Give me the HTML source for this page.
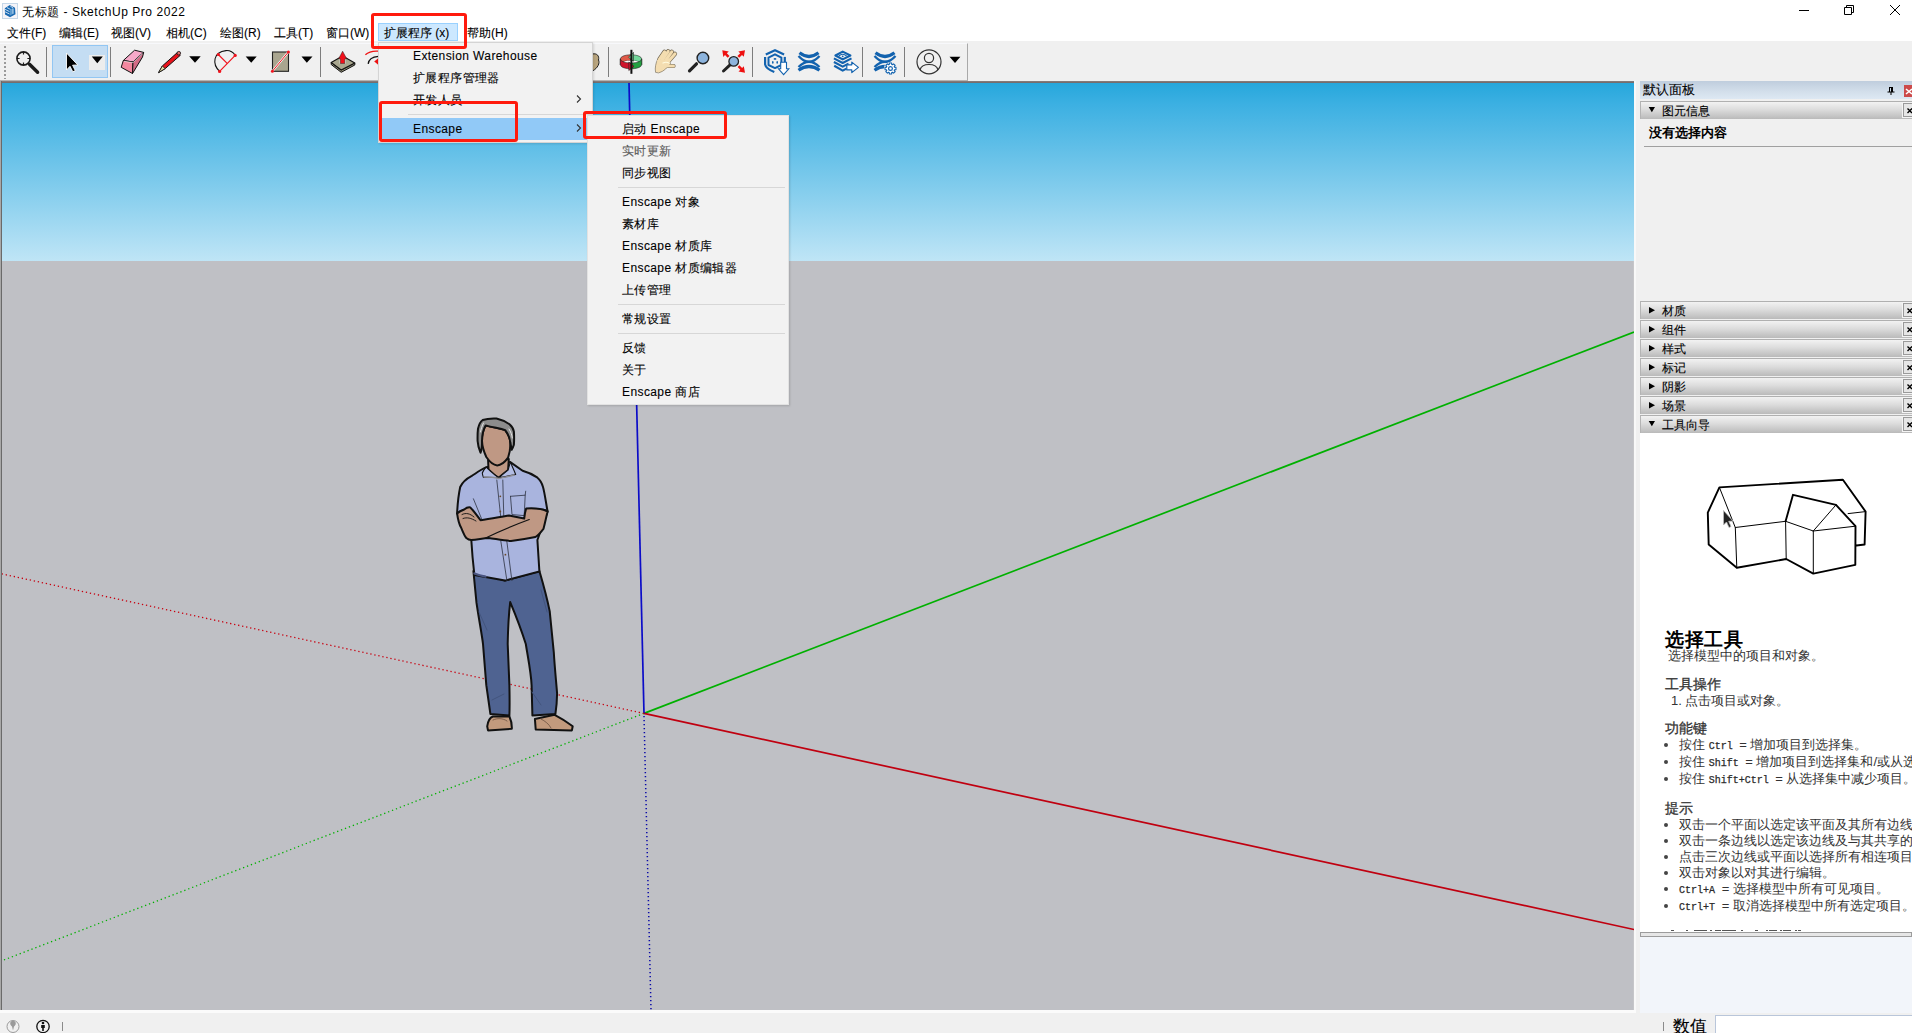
<!DOCTYPE html>
<html><head><meta charset="utf-8">
<style>
*{margin:0;padding:0;box-sizing:border-box}
html,body{width:1912px;height:1033px;overflow:hidden;background:#f0f0f0;font-family:"Liberation Sans",sans-serif;font-size:12px;color:#000}
.a{position:absolute}
.t{position:absolute;white-space:nowrap;line-height:12px}
svg{position:absolute;overflow:visible}
#titlebar{left:0;top:0;width:1912px;height:22px;background:#fff}
#menubar{left:0;top:22px;width:1912px;height:19px;background:#fff}
#toolbar{left:0;top:41px;width:1912px;height:40px;background:#f0f0f0}
#vpb{left:0;top:81px;width:1636px;height:929px;background:#9a9a9a}
#sky{left:2px;top:83px;width:1632px;height:178px;background:linear-gradient(#26a7dc,#3cb0e2 12%,#bfe5f6)}
#ground{left:2px;top:261px;width:1632px;height:749px;background:#bfc0c5}
#status{left:0;top:1011px;width:1912px;height:22px;background:#f0f0f0}
.mi{font-size:12px;-webkit-text-stroke:0.1px #000}
.dd{letter-spacing:0.4px}
</style></head><body>
<div id="titlebar" class="a"></div>
<div id="menubar" class="a"></div>
<div id="toolbar" class="a"></div>
<div id="vpb" class="a"></div>
<div id="sky" class="a"></div>
<div id="ground" class="a"></div>
<div id="status" class="a"></div>

<!-- VIEWPORT BORDER -->
<div class="a" style="left:0;top:81px;width:1636px;height:2px;background:linear-gradient(#8a8080,#6e6868)"></div>
<div class="a" style="left:0;top:81px;width:1px;height:929px;background:#a8a8a8"></div>
<div class="a" style="left:1px;top:81px;width:1px;height:929px;background:#6a6a6a"></div>
<div class="a" style="left:1634px;top:81px;width:2px;height:929px;background:#f8f8f8"></div>
<div class="a" style="left:1633px;top:261px;width:1px;height:749px;background:#c6c6c9"></div>
<!-- AXES -->
<svg style="left:0;top:0" width="1636" height="1011" viewBox="0 0 1636 1011">
<defs><clipPath id="vc"><rect x="2" y="83" width="1632" height="927"/></clipPath></defs>
<g clip-path="url(#vc)">
<path d="M644 713.4 L1634 332" stroke="#00b000" stroke-width="1.7"/>
<path d="M644 713.4 L1634 929.5" stroke="#c00010" stroke-width="1.7"/>
<path d="M629 83 L644 713.4" stroke="#0c0cc8" stroke-width="1.7"/>
<path d="M644 713.4 L0 961.5" stroke="#00b000" stroke-width="1.3" stroke-dasharray="1.3 2.9"/>
<path d="M644 713.4 L0 573.5" stroke="#c80010" stroke-width="1.3" stroke-dasharray="1.3 2.8"/>
<path d="M644 716 L651 1010" stroke="#0808a8" stroke-width="1.5" stroke-dasharray="1.3 2.7"/>
</g>
</svg>

<!-- PERSON -->
<svg style="left:0;top:0" width="1636" height="1011" viewBox="0 0 1636 1011">
<g stroke="#111" stroke-width="2" stroke-linejoin="round" stroke-linecap="round">
<!-- jeans -->
<path d="M473.4 571 L476.5 602.9 C479 620 482 635 483 644 L486.3 685.2 L490.4 714 L509.4 715.5 C509.8 705 509.6 695 509.4 685.2 L507.7 644 C508 628 509 612 510.2 602.1 C516 616 522 632 525.8 644 C528 658 531 672 531.6 685.2 L532.4 715.5 L555.4 714 C556.5 707 557 700 557.1 693.4 C556 680 554.5 665 553.8 652.3 C552.5 638 551 624 549.7 611.1 C547 598 543.5 585 539.4 571 L504.9 580.6 Z" fill="#4f6391"/>
<path d="M479 612 L487 630 M492 700 L504 694 M541 590 L547 612 M532 692 L541 705" stroke="#43557e" stroke-width="1" fill="none"/>
<!-- shoes -->
<path d="M487.2 726.3 C488 721 490 717.5 492.9 716.5 L509.4 716.5 C511 720 512 725 511.8 728.8 L488 730.4 Z" fill="#c29a7d"/>
<path d="M534.9 718.9 L554.6 714.8 C561 718 567 722 572.7 726.3 L571.9 730.4 L535.7 729.5 Z" fill="#c29a7d"/>
<path d="M493 720 C497 718 503 718 507 721 M541 719 C545 721 549 724 551 728" stroke="#6b5040" stroke-width="0.8" fill="none"/>
<!-- shirt -->
<path d="M486.3 467.2 C480 470 475 474 471.8 475.9 C466 479 462 483 460.2 487 C458.5 495 457.5 505 457.1 513.5 L463.2 510 L471.3 540 C472 552 473 563 474.4 575 L504.9 580.6 L539.4 571.5 L537.4 540 L547.6 511.5 C546 503 544.5 492 543 487 C541 480 537 477.4 537.1 477.4 C532 474 527 472 522.6 470.8 L510.3 462.1 Z" fill="#a9b4de"/>
<path d="M474.4 573.5 C478 575 482 576 485.6 576.6" stroke="#4a5580" stroke-width="2.2" fill="none"/>
<!-- shirt details -->
<g fill="none" stroke="#2c3140" stroke-width="0.8">
<path d="M496.8 480 L500.8 517.6 M502.8 480 L503.8 517.6 M500.8 541 L506.9 580.6 M506.8 541 L511.9 580.6"/>
<path d="M510.5 496.3 L525.2 495.2 L525.7 491.2 M510.5 496.3 L512 514.6 L524.2 515.6 L525.2 495.2"/>
<path d="M473.4 498.8 L481.5 518.6"/>
</g>
<circle cx="500.3" cy="496.3" r="0.9" fill="#6b4a2a" stroke="none"/><circle cx="500.3" cy="511.5" r="0.9" fill="#6b4a2a" stroke="none"/><circle cx="505.4" cy="554.7" r="0.9" fill="#6b4a2a" stroke="none"/>
<!-- arms -->
<path d="M457.1 513.5 C458 520 459.5 525 461.2 527.8 C463 532 464.5 536 466.3 538 C468 539.5 470 540 471.3 540 C477 539.5 483 538.5 488.6 538 C496 539 504 540.5 511 541 C519 540 528 538.5 535.4 537 C539 535 541.5 531 543.5 528.8 C545 523 546 518 547.6 511.5 C542 508.5 534 508 526.2 508.5 C525 512 524.5 515 524.2 518.6 C516 517 510 515.8 509 515.6 C500 517 490 519 480.5 520.2 C476 514 472 509 470.3 507.4 C468 507 466 508 464.2 509.5 C461 510.5 459 511.5 457.1 513.5 Z" fill="#bf9884"/>
<path d="M485.6 538 C496 533 512 526 529.3 519.6" fill="none" stroke-width="1.1"/>
<path d="M462 514.5 C466 512.5 470 513.5 474 517 M463 518.5 C467 517 471 518 476 521" fill="none" stroke-width="0.9"/>
<path d="M526 508.5 C532 508.5 540 508.2 546.5 510" fill="none" stroke-width="1.1"/>
<!-- neck -->
<path d="M488.1 460 L488.5 469.4 C492 473 495.5 476 498.7 477.7 C502 475 505 472.5 508.1 470.1 L508.8 459 Z" fill="#bf9884"/>
<!-- collar -->
<path d="M486.3 467.2 C484.5 469 483 471 482.3 473 C482.5 475 483 476.5 483.4 477.4 C488 477 494 477.5 498.7 477.7 C495 475 491 471.5 488.5 469.4 Z" fill="#b3bde4" stroke-width="1.1"/>
<path d="M508.1 470.1 C505 472.5 502 475 498.7 477.7 C504 477 510 475.5 515.7 474.5 C514 470 512 466 510.3 462.1 Z" fill="#b3bde4" stroke-width="1.1"/>
<path d="M484 477 C490 477 495 477.5 498.7 478.5 C503 477.5 508 476.5 514 475" fill="none" stroke="#8d8d95" stroke-width="1.4"/>
<!-- face -->
<path d="M485.6 425.4 C490 427 494 427.5 497.2 428 C501 428.7 503.5 429.5 505.2 430.2 C508 434 510 438 510.3 442.5 C510.5 448 509.8 453 508.1 457.7 C505 462 501 465.4 497.2 465.4 C492.5 465 489 461 486.3 457 C484 452 482.2 446 482 441 C482 434 483.5 429 485.6 425.4 Z" fill="#bf9884"/>
<!-- hair -->
<path d="M478 428.7 C479 424.5 480.5 421.5 482.7 420 C487 418.5 492 418.3 496.5 418.5 C501 419.5 505.5 421.5 509.5 424.3 C512 426.5 513.5 429 513.9 431.6 C514.2 436 514.2 440.5 513.9 444.7 C513.3 446.5 512.6 448.3 511.7 449.8 C511 446 510.6 444 510.3 442.5 C510 438 508 434 505.2 430.2 C503.5 429.5 501 428.7 497.2 428 C494 427.5 490 427 485.6 425.4 C483.5 429 482 434 482 441 C482 445 482.3 449 480.5 452.7 C479 449 477.8 445 477.6 441 C477.5 437 477.6 432 478 428.7 Z" fill="#8c8c8c"/>
<path d="M483.5 423 C482 426 481 429 480.5 432 M509 429 C511 432 512 435 512.3 438" fill="none" stroke="#e6e6e6" stroke-width="1"/>
</g>
</svg>
<!-- TITLE -->
<svg style="left:0;top:0" width="22" height="22" viewBox="0 0 22 22">
<rect x="2.5" y="3.5" width="15" height="15" fill="#f5f4f8" stroke="#c5d7e8"/>
<path d="M4.8 8.2 L9.8 5 L15 7.8 L15.5 14.2 L10 17.2 L5 14.6 Z" fill="#1a6ab2"/>
<path d="M5 9.3 L9.5 11.6 M5 11.8 L9.5 14 M7 7.6 L11.5 9.9 M10.3 6.2 L13 7.7" stroke="#cfe2f4" stroke-width="0.9" fill="none"/>
<path d="M10 9.5 L13.2 8.2 L13.2 13.8 L10 15.6 Z" fill="#5b9bd0"/>
<path d="M13 8.5 L13 13.8" stroke="#e0ecf8" stroke-width="0.8"/>
</svg>
<div class="t" style="left:22px;top:6px;font-size:12px;letter-spacing:0.55px">无标题 - SketchUp Pro 2022</div>
<!-- window controls -->
<svg style="left:1799px;top:5px" width="102" height="11" viewBox="0 0 102 11">
<path d="M0 5.5 H10" stroke="#000" stroke-width="1"/>
<path d="M45.5 2.5 H52.5 V9.5 H45.5 Z M47.5 2.5 V0.5 H54.5 V7.5 H52.5" fill="none" stroke="#000" stroke-width="1"/>
<path d="M91 0 L101 10 M101 0 L91 10" stroke="#000" stroke-width="1"/>
</svg>

<!-- MENU BAR -->
<div class="a" style="left:378px;top:23px;width:80px;height:18px;background:#cce8ff;border:1px solid #99d1ff"></div>
<div class="t mi" style="left:7px;top:27px">文件(F)</div>
<div class="t mi" style="left:59px;top:27px">编辑(E)</div>
<div class="t mi" style="left:111px;top:27px">视图(V)</div>
<div class="t mi" style="left:166px;top:27px">相机(C)</div>
<div class="t mi" style="left:220px;top:27px">绘图(R)</div>
<div class="t mi" style="left:274px;top:27px">工具(T)</div>
<div class="t mi" style="left:326px;top:27px">窗口(W)</div>
<div class="t mi" style="left:384px;top:27px">扩展程序 (x)</div>
<div class="t mi" style="left:467px;top:27px">帮助(H)</div>


<!-- TOOLBAR -->
<div class="a" style="left:0;top:43px;width:968px;height:38px;border-top:1px solid #f7f8fb;border-right:1px solid #a9a9a9;border-bottom:1px solid #b4b4b4;background:#f0f0f0"></div>
<svg style="left:0;top:41px" width="980" height="40" viewBox="0 41 980 40">
<g fill="#9a9a9a">
<rect x="4" y="46" width="2" height="2"/><rect x="4" y="50" width="2" height="2"/><rect x="4" y="54" width="2" height="2"/><rect x="4" y="58" width="2" height="2"/><rect x="4" y="62" width="2" height="2"/><rect x="4" y="66" width="2" height="2"/><rect x="4" y="70" width="2" height="2"/><rect x="4" y="74" width="2" height="2"/><rect x="4" y="78" width="2" height="1"/>
</g>
<!-- zoom -->
<circle cx="23.5" cy="58.5" r="6.6" fill="none" stroke="#1c1c1c" stroke-width="1.6"/>
<path d="M23.5 51.9 V54.6 M23.5 62.4 V65.1 M16.9 58.5 H19.6 M27.4 58.5 H30.1" stroke="#1c1c1c" stroke-width="1.2"/>
<path d="M29.5 64.2 L37.6 72.3" stroke="#1c1c1c" stroke-width="3.4" stroke-linecap="round"/>
<!-- separators -->
<g fill="#7d7d7d"><rect x="46" y="47" width="1" height="30"/><rect x="110" y="47" width="1" height="30"/><rect x="320" y="47" width="1" height="30"/><rect x="608" y="47" width="1" height="30"/><rect x="752" y="47" width="1" height="30"/><rect x="862" y="47" width="1" height="30"/><rect x="904" y="47" width="1" height="30"/></g>
<!-- select -->
<rect x="52.5" y="45.5" width="55" height="32" fill="#c4ddf3" stroke="#92c6f3"/>
<rect x="89" y="55" width="16" height="15" fill="#ededed"/>
<path d="M66.5 53 L66.5 70 L70 66.3 L72.8 71.8 L75.3 70.6 L72.6 65.2 L77.8 65 Z" fill="#000" stroke="#fff" stroke-width="0.9"/>
<path d="M91.8 56.5 H102.8 L97.3 63.3 Z" fill="#000"/>
<!-- eraser -->
<path d="M123.3 60.5 L134.6 50.2 L143.7 52.4 L133 62 Z" fill="#f7a9c9" stroke="#111" stroke-width="1"/>
<path d="M123.3 60.5 L133 62 L132.5 73.5 L121.2 67.3 Z" fill="#f2889f" stroke="#111" stroke-width="1"/>
<path d="M133 62 L143.7 52.4 L142.5 57 L132.5 73.5 Z" fill="#d36b86" stroke="#111" stroke-width="1"/>
<path d="M124 61.3 L133 62.6 L142.6 53.5" stroke="#fff" stroke-width="0.6" fill="none"/>
<!-- pencil -->
<path d="M158.6 72.6 L162.3 66 L177.3 52.6 L180.3 55.3 L165.2 68.6 Z" fill="#e8121a" stroke="#111" stroke-width="1"/>
<path d="M158.6 72.6 L162.3 66 L165.2 68.6 Z" fill="#e6e0a8" stroke="#111" stroke-width="0.8"/>
<circle cx="178.8" cy="53.2" r="1.8" fill="#e07070" stroke="#111" stroke-width="0.8"/>
<path d="M189.2 56.3 H200.7 L195 62.8 Z" fill="#000"/>
<!-- arc -->
<path d="M219.6 71.4 C212 64 213 52 226 50.6 C230 50.3 233 52 235.2 55.4" fill="none" stroke="#111" stroke-width="1.1"/>
<path d="M218.3 54.5 L226.9 63.2 M219.6 71.4 L235.2 55.4" stroke="#f0141e" stroke-width="1.2"/>
<circle cx="218.3" cy="54.5" r="1.6" fill="#f0141e"/><circle cx="235.2" cy="55.4" r="1.6" fill="#f0141e"/><circle cx="219.6" cy="71.4" r="1.6" fill="#f0141e"/>
<path d="M245.7 56.4 H256.7 L251.2 62.8 Z" fill="#000"/>
<!-- rect -->
<rect x="272.5" y="52" width="16" height="19.3" fill="#a9a58f" stroke="#222" stroke-width="1.1"/>
<path d="M272.4 71.2 L288.4 52" stroke="#fff" stroke-width="2"/>
<path d="M272.4 71.2 L288.4 52" stroke="#f0141e" stroke-width="1"/>
<circle cx="272.4" cy="71.2" r="1.5" fill="#f0141e"/><circle cx="288.4" cy="52" r="1.5" fill="#f0141e"/>
<path d="M301.5 56.4 H312.5 L306.8 62.8 Z" fill="#000"/>
<!-- push pull -->
<path d="M331.2 62.5 L331.2 64.5 L341.2 72.3 L354.8 65 L354.8 63 L341.2 70 Z" fill="#8f8d74" stroke="#111" stroke-width="1"/>
<path d="M331.2 62.5 L342.6 56 L354.8 63 L341.2 70 Z" fill="#a9a78f" stroke="#111" stroke-width="1.1" stroke-linejoin="round"/>
<path d="M339.3 63.6 L339.3 58.8 L345.8 58.8 L345.8 63.6 Z" fill="#e8e8dc"/>
<path d="M342.6 51.2 L346.7 58.8 L344.8 58.8 L344.8 63.5 L340.3 63.5 L340.3 58.8 L338.6 58.8 Z" fill="#f0101a" stroke="#222" stroke-width="0.5"/>
<!-- follow me partial -->
<path d="M365.4 54.8 C368.5 51.8 373 50.8 378.5 51.2" fill="none" stroke="#ee1111" stroke-width="1.3"/>
<path d="M368.2 63.9 C368.6 59.5 372 56.8 378.5 56.3" fill="none" stroke="#111" stroke-width="1.3"/>
<path d="M374.2 61.4 L378.5 58 L378.5 65 Z" fill="#ee1111"/>
<!-- tape partial -->
<path d="M592.5 54 C597 53 599.5 56 598.5 60 C600 63 598 68 592.5 71 Z" fill="#b9a57e" stroke="#222" stroke-width="1"/>
<!-- orbit -->
<g stroke="#222" stroke-width="0.6" stroke-linejoin="round">
<path d="M620.30 58.90 L621.19 57.26 L622.08 56.63 L622.97 56.19 L623.87 55.84 L624.76 55.57 L625.65 55.35 L626.54 55.17 L627.43 55.03 L628.33 54.93 L629.22 54.86 L630.11 54.81 L631.00 54.80 L631.00 60.60 L630.11 60.61 L629.22 60.66 L628.33 60.73 L627.43 60.83 L626.54 60.97 L625.65 61.15 L624.76 61.37 L623.87 61.64 L622.97 61.99 L622.08 62.43 L621.19 63.06 L620.30 64.70 Z" fill="#e05a48"/>
<path d="M631.00 54.80 L631.89 54.81 L632.78 54.86 L633.67 54.93 L634.57 55.03 L635.46 55.17 L636.35 55.35 L637.24 55.57 L638.13 55.84 L639.03 56.19 L639.92 56.63 L640.81 57.26 L641.70 58.90 L641.70 64.70 L640.81 63.06 L639.92 62.43 L639.03 61.99 L638.13 61.64 L637.24 61.37 L636.35 61.15 L635.46 60.97 L634.57 60.83 L633.67 60.73 L632.78 60.66 L631.89 60.61 L631.00 60.60 Z" fill="#72d79a"/>
<path d="M623.44 61.80 L624.70 61.39 L625.96 61.08 L627.22 60.86 L628.48 60.72 L629.74 60.63 L631.00 60.60 L632.26 60.63 L633.52 60.72 L634.78 60.86 L636.04 61.08 L637.30 61.39 L638.56 61.80 L638.56 61.80 L637.30 62.21 L636.04 62.52 L634.78 62.74 L633.52 62.88 L632.26 62.97 L631.00 63.00 L629.74 62.97 L628.48 62.88 L627.22 62.74 L625.96 62.52 L624.70 62.21 L623.44 61.80 Z" fill="#fff" stroke="none"/>
<path d="M620.30 58.90 L621.19 60.54 L622.08 61.17 L622.97 61.61 L623.87 61.96 L624.76 62.23 L625.65 62.45 L626.54 62.63 L627.43 62.77 L628.33 62.87 L629.22 62.94 L630.11 62.99 L631.00 63.00 L631.00 68.80 L630.11 68.79 L629.22 68.74 L628.33 68.67 L627.43 68.57 L626.54 68.43 L625.65 68.25 L624.76 68.03 L623.87 67.76 L622.97 67.41 L622.08 66.97 L621.19 66.34 L620.30 64.70 Z" fill="#d0142c"/>
<path d="M631.00 63.00 L631.89 62.99 L632.78 62.94 L633.67 62.87 L634.57 62.77 L635.46 62.63 L636.35 62.45 L637.24 62.23 L638.13 61.96 L639.03 61.61 L639.92 61.17 L640.81 60.54 L641.70 58.90 L641.70 64.70 L640.81 66.34 L639.92 66.97 L639.03 67.41 L638.13 67.76 L637.24 68.03 L636.35 68.25 L635.46 68.43 L634.57 68.57 L633.67 68.67 L632.78 68.74 L631.89 68.79 L631.00 68.80 Z" fill="#22a040"/>
<path d="M628.8 62 L634 66.3 L628.8 70.5 Z" fill="#d0142c"/>
<path d="M633.5 52.3 L628.5 57.3 L633.5 61.2 Z" fill="#72d79a"/>
</g>
<rect x="630.4" y="49.8" width="2" height="24" fill="#111"/>
<!-- hand -->
<g stroke-linecap="round">
<g stroke="#6d6350" stroke-width="4.2"><path d="M659.5 59 L664.5 51.8 M662.5 59.5 L668.2 51.3 M665.5 60.5 L671.8 51.8 M668 62 L675 53.8 M667.5 66 L673.5 66"/></g>
<path d="M655.5 72 C654.8 68 655.6 63 658 58.5 L668.5 60 L670.5 63.5 C668 67 664 71.5 659 72.8 Z" fill="#f4ddb0" stroke="#6d6350" stroke-width="0.6"/>
<g stroke="#f4ddb0" stroke-width="3"><path d="M659.5 59 L664.5 51.8 M662.5 59.5 L668.2 51.3 M665.5 60.5 L671.8 51.8 M668 62 L675 53.8 M667.5 66 L673.5 66"/></g>
<path d="M657 60 L668.5 61.5 L669 64 L660 70 Z" fill="#f4ddb0"/>
<path d="M663 63 C665 62 667 62 669 63" stroke="#fffbe0" stroke-width="1.2" fill="none"/>
</g>
<!-- magnifier -->
<path d="M696.5 63.8 L689.5 70.8" stroke="#222" stroke-width="3.2" stroke-linecap="round"/>
<circle cx="702.9" cy="58" r="5.8" fill="#8db4dd" stroke="#222" stroke-width="1.4"/>
<!-- zoom extents -->
<path d="M729.8 65.2 L723.5 71" stroke="#222" stroke-width="3" stroke-linecap="round"/>
<circle cx="733.7" cy="61.4" r="4.8" fill="#8db4dd" stroke="#222" stroke-width="1.3"/>
<path d="M722.3 50.3 L728.8 51.5 L726.8 53.3 L729.5 56 L727.7 57.8 L725 55 L723.3 57 Z" fill="#ee1111"/>
<path d="M745 50.3 L743.8 56.8 L742 55 L739.2 57.8 L737.4 56 L740.2 53.2 L738.3 51.5 Z" fill="#ee1111"/>
<path d="M745 72.8 L738.5 71.6 L740.3 69.8 L737.6 67 L739.4 65.2 L742.1 68 L743.8 66.2 Z" fill="#ee1111"/>
<!-- enscape icons -->
<g fill="none" stroke="#1262ae" stroke-linejoin="round">
<path d="M765.8 54.5 L775 50.2 L784.1 54.5" stroke-width="2.2"/>
<path d="M765.1 56.9 L765.1 64.4 C765.5 67 768 69.5 774.3 72" stroke-width="2.2"/>
<path d="M784.8 56.9 L784.8 62" stroke-width="2.2"/>
<path d="M775 54.3 L781.4 57.6 L781.4 65 L775 68.1 L768.5 65 L768.5 57.6 Z" stroke-width="2"/>
</g>
<g fill="#1262ae"><ellipse cx="775" cy="58.9" rx="1.4" ry="0.9"/><ellipse cx="772.8" cy="62.4" rx="0.8" ry="1.3"/><ellipse cx="777.2" cy="62.4" rx="0.8" ry="1.3"/></g>
<path d="M780.7 62.3 H786.5 V68.8 H788.8 L783.6 74.6 L778.5 68.8 H780.7 Z" fill="#fff" stroke="#1262ae" stroke-width="1.1"/>
<g fill="none" stroke="#1262ae" stroke-linecap="butt">
<path d="M799.5 52.8 Q809 60.2 818.5 52.8" stroke-width="3.2"/>
<path d="M798.5 56 Q809 67.6 819.5 56" stroke-width="2.3"/>
<path d="M798.5 67 Q809 56.6 819.5 67" stroke-width="2.3"/>
<path d="M798.5 70.2 Q809 62.8 819.5 70.2" stroke-width="3.2"/>
</g><g fill="none" stroke="#1262ae" stroke-linejoin="round">
<path d="M835.4 55.5 L842.7 51.6 L850.4 55.5 L842.7 59.4 Z" stroke-width="2.1"/>
<path d="M838.8 56 Q842.7 52.6 846.6 56" stroke-width="1.1"/>
<path d="M833.9 58.3 L842.7 63 L851.5 58.3" stroke-width="2"/>
<path d="M833.9 62 L842.7 66.7 L848.5 63.6" stroke-width="2"/>
<path d="M834.2 65.8 L842.7 70.6 L846.5 68.6" stroke-width="2.2"/>
</g>
<circle cx="842.7" cy="56.3" r="0.9" fill="#1262ae"/>
<path d="M846.8 64.8 H851.8 V62.1 L858.4 67.4 L851.8 72.6 V69.9 H846.8 Z" fill="#fff" stroke="#1262ae" stroke-width="1.2" stroke-linejoin="round"/>
<g fill="none" stroke="#1262ae" stroke-linecap="butt">
<path d="M875.5 52.8 Q885 60.2 894.5 52.8" stroke-width="3.2"/>
<path d="M874.5 56 Q885 67.6 895.5 56" stroke-width="2.3"/>
<path d="M874.5 67 Q885 56.6 895.5 67" stroke-width="2.3"/>
<path d="M874.5 70.2 Q885 62.8 895.5 70.2" stroke-width="3.2"/>
</g>
<circle cx="890.5" cy="68.5" r="6.6" fill="#f0f0f0"/>
<path d="M895.99 67.39 L895.99 69.61 L894.51 69.74 L894.21 70.46 L895.17 71.59 L893.59 73.17 L892.46 72.21 L891.74 72.51 L891.61 73.99 L889.39 73.99 L889.26 72.51 L888.54 72.21 L887.41 73.17 L885.83 71.59 L886.79 70.46 L886.49 69.74 L885.01 69.61 L885.01 67.39 L886.49 67.26 L886.79 66.54 L885.83 65.41 L887.41 63.83 L888.54 64.79 L889.26 64.49 L889.39 63.01 L891.61 63.01 L891.74 64.49 L892.46 64.79 L893.59 63.83 L895.17 65.41 L894.21 66.54 L894.51 67.26 Z" fill="#fff" stroke="#1262ae" stroke-width="1.1" stroke-linejoin="round"/>
<circle cx="890.5" cy="68.5" r="1.9" fill="#fff" stroke="#1262ae" stroke-width="1.2"/>
<!-- user -->
<circle cx="929" cy="61.8" r="12" fill="none" stroke="#333" stroke-width="1.2"/>
<circle cx="929" cy="58" r="4.6" fill="none" stroke="#333" stroke-width="1.2"/>
<path d="M920 70 C921 66 925 64.5 929 64.5 C933 64.5 937 66 938 70" fill="none" stroke="#333" stroke-width="1.2"/>
<path d="M949.5 56.7 H960.4 L955 63 Z" fill="#000"/>
</svg>

<!-- RIGHT PANEL -->
<style>
.sh{left:1640px;width:272px;height:18px;border-top:1px solid #b0b0b0;border-left:1px solid #b4b4b4;background:linear-gradient(#f2f2f2,#dcdcdc 45%,#bababa)}
.cb{left:1903px;width:12px;height:14px;border:1px solid #9a9a9a;background:#e6e6e6;outline:1px solid #f4f4f4}
</style>
<div class="a" style="left:1640px;top:81px;width:272px;height:18px;background:linear-gradient(#bfcddd,#d3dfeb 60%,#dde8f3)"></div>
<div class="t mi" style="left:1643px;top:83px;font-size:13px;line-height:13px">默认面板</div>
<svg style="left:1886px;top:86px" width="10" height="10" viewBox="0 0 10 10"><path d="M3 1 H7 V5.5 H8.5 V6.5 H5.5 V9 H4.5 V6.5 H1.5 V5.5 H3 Z M4 2 V5.5 H5 V2 Z" fill="#000"/></svg>
<div class="a" style="left:1904px;top:85px;width:8px;height:12px;background:#cc4a4a"></div>
<svg style="left:1904px;top:85px" width="8" height="12" viewBox="0 0 8 12"><path d="M2 4 L8 9 M8 4 L2 9" stroke="#fff" stroke-width="1.6"/></svg>
<div class="a sh" style="top:101px"></div><div class="a cb" style="top:103px"></div><div class="t mi" style="left:1662px;top:105px">图元信息</div>
<div class="t" style="left:1649px;top:127px;font-size:13px;font-weight:bold">没有选择内容</div>
<div class="a" style="left:1644px;top:146px;width:268px;height:1px;background:#a0a0a0"></div>
<div class="a sh" style="top:301px"></div><div class="a cb" style="top:303px"></div><div class="t mi" style="left:1662px;top:305px">材质</div>
<div class="a sh" style="top:320px"></div><div class="a cb" style="top:322px"></div><div class="t mi" style="left:1662px;top:324px">组件</div>
<div class="a sh" style="top:339px"></div><div class="a cb" style="top:341px"></div><div class="t mi" style="left:1662px;top:343px">样式</div>
<div class="a sh" style="top:358px"></div><div class="a cb" style="top:360px"></div><div class="t mi" style="left:1662px;top:362px">标记</div>
<div class="a sh" style="top:377px"></div><div class="a cb" style="top:379px"></div><div class="t mi" style="left:1662px;top:381px">阴影</div>
<div class="a sh" style="top:396px"></div><div class="a cb" style="top:398px"></div><div class="t mi" style="left:1662px;top:400px">场景</div>
<div class="a sh" style="top:415px"></div><div class="a cb" style="top:417px"></div><div class="t mi" style="left:1662px;top:419px">工具向导</div>

<svg style="left:0;top:0" width="1912" height="1033" viewBox="0 0 1912 1033"><g fill="#000">
<path d="M1648.7 107 L1655 107 L1651.85 112.3 Z"/><path d="M1649 307 L1655 310.2 L1649 313.4 Z"/><path d="M1649 326 L1655 329.2 L1649 332.4 Z"/><path d="M1649 345 L1655 348.2 L1649 351.4 Z"/><path d="M1649 364 L1655 367.2 L1649 370.4 Z"/><path d="M1649 383 L1655 386.2 L1649 389.4 Z"/><path d="M1649 402 L1655 405.2 L1649 408.4 Z"/><path d="M1648.7 421 L1655 421 L1651.85 426.3 Z"/>
</g><g stroke="#000" stroke-width="1.4">
<path d="M1907.5 108.5 L1912 113 M1907.5 113 L1912 108.5"/><path d="M1907.5 308.5 L1912 313 M1907.5 313 L1912 308.5"/><path d="M1907.5 327.5 L1912 332 M1907.5 332 L1912 327.5"/><path d="M1907.5 346.5 L1912 351 M1907.5 351 L1912 346.5"/><path d="M1907.5 365.5 L1912 370 M1907.5 370 L1912 365.5"/><path d="M1907.5 384.5 L1912 389 M1907.5 389 L1912 384.5"/><path d="M1907.5 403.5 L1912 408 M1907.5 408 L1912 403.5"/><path d="M1907.5 422.5 L1912 427 M1907.5 427 L1912 422.5"/></g></svg>
<div class="a" style="left:1640px;top:433px;width:272px;height:499px;background:#fff"></div>
<div class="a" style="left:1640px;top:932px;width:272px;height:5px;background:#e6e6e6;border:1px solid #9c9c9c"></div>
<div class="a" style="left:1640px;top:937px;width:272px;height:76px;background:#f2f5fa"></div>

<!-- TOOL GUIDE -->
<svg style="left:0;top:0" width="1912" height="1033" viewBox="0 0 1912 1033">
<g fill="none" stroke="#000" stroke-linejoin="round" stroke-linecap="round">
<path d="M1707.8 512.6 L1719.4 487.4 L1842.9 479.7 L1865.6 511.6 L1864.6 544.5 L1856.5 545.5 M1707.8 512.6 L1708.7 544.5 L1736.8 567.8 L1786.2 559 L1813.3 573.6 L1855.3 564.9 L1855.5 526.2 L1836 504.9 L1793 494.8 L1785.6 521.3" stroke-width="1.9"/>
<path d="M1719.4 487.4 L1735.3 527.5 L1785.6 521.3 L1813.3 531 L1855.5 526.2 M1735.3 527.5 L1736.8 567.8 M1785.6 521.3 L1786.2 559 M1813.3 531 L1813.3 573.6 M1836 504.9 L1813.3 531 M1848.1 513.6 L1865.6 511.6" stroke-width="1"/>
</g>
<path d="M1723.5 510.5 L1723.5 525 L1726.5 522 L1729 527.5 L1731 526.5 L1728.7 521.3 L1733 521 Z" fill="#222" stroke="#bbb" stroke-width="0.8"/>
</svg>
<style>
.g{position:absolute;white-space:nowrap;line-height:13px;font-size:13px;color:#333}
.gb{position:absolute;white-space:nowrap;line-height:14px;font-size:14px;color:#333;-webkit-text-stroke:0.3px #333}
.bu{position:absolute;width:4px;height:4px;border-radius:2px;background:#444}
.k{font-family:"Liberation Mono",monospace;font-size:10px;color:#2a2a2a;-webkit-text-stroke:0.25px #2a2a2a;margin-right:3px}
</style>
<div class="gb" style="left:1665px;top:630px;font-size:19px;line-height:19px;color:#000;font-weight:bold;-webkit-text-stroke:0;letter-spacing:0.5px">选择工具</div>
<div class="g" style="left:1668px;top:649px">选择模型中的项目和对象。</div>
<div class="gb" style="left:1665px;top:677px">工具操作</div>
<div class="g" style="left:1671px;top:694px">1. 点击项目或对象。</div>
<div class="gb" style="left:1665px;top:721px">功能键</div>
<div class="bu" style="left:1664px;top:743px"></div><div class="g" style="left:1679px;top:738px">按住 <span class="k">Ctrl</span> = 增加项目到选择集。</div>
<div class="bu" style="left:1664px;top:760px"></div><div class="g" style="left:1679px;top:755px">按住 <span class="k">Shift</span> = 增加项目到选择集和/或从选择集中减少项目。</div>
<div class="bu" style="left:1664px;top:777px"></div><div class="g" style="left:1679px;top:772px">按住 <span class="k">Shift+Ctrl</span> = 从选择集中减少项目。</div>
<div class="gb" style="left:1665px;top:801px">提示</div>
<div class="bu" style="left:1664px;top:823px"></div><div class="g" style="left:1679px;top:818px">双击一个平面以选定该平面及其所有边线。</div>
<div class="bu" style="left:1664px;top:839px"></div><div class="g" style="left:1679px;top:834px">双击一条边线以选定该边线及与其共享的平面。</div>
<div class="bu" style="left:1664px;top:855px"></div><div class="g" style="left:1679px;top:850px">点击三次边线或平面以选择所有相连项目。</div>
<div class="bu" style="left:1664px;top:871px"></div><div class="g" style="left:1679px;top:866px">双击对象以对其进行编辑。</div>
<div class="bu" style="left:1664px;top:887px"></div><div class="g" style="left:1679px;top:882px"><span class="k">Ctrl+A</span> = 选择模型中所有可见项目。</div>
<div class="bu" style="left:1664px;top:904px"></div><div class="g" style="left:1679px;top:899px"><span class="k">Ctrl+T</span> = 取消选择模型中所有选定项目。</div>
<svg style="left:0;top:0" width="1912" height="1033" viewBox="0 0 1912 1033"><g fill="#555"><rect x="1671" y="930" width="3" height="1"/><rect x="1686" y="930" width="2" height="1"/><rect x="1694" y="930" width="13" height="1"/><rect x="1710" y="930" width="2" height="1"/><rect x="1715" y="930" width="6" height="1"/><rect x="1722" y="930" width="14" height="1"/><rect x="1741" y="930" width="2" height="1"/><rect x="1755" y="930" width="3" height="1"/><rect x="1766" y="930" width="2" height="1"/><rect x="1769" y="930" width="8" height="1"/><rect x="1780" y="930" width="2" height="1"/><rect x="1783" y="930" width="8" height="1"/><rect x="1795" y="930" width="2" height="1"/><rect x="1798" y="930" width="3" height="1"/></g></svg>

<!-- STATUS BAR -->
<div class="a" style="left:0;top:1010px;width:1636px;height:3px;background:#fbfbfb"></div>
<svg style="left:0;top:1012px" width="80" height="22" viewBox="0 1011 80 22">
<circle cx="13" cy="1025.5" r="6" fill="none" stroke="#9a9a9a" stroke-width="1"/>
<path d="M13 1029.5 L12 1025.5 C10.8 1024.5 10.2 1023.5 10.2 1022.5 C10.2 1020.8 11.5 1019.8 13 1019.8 C14.5 1019.8 15.8 1020.8 15.8 1022.5 C15.8 1023.5 15.2 1024.5 14 1025.5 Z" fill="#9a9a9a"/>
<circle cx="43" cy="1025.5" r="6.2" fill="none" stroke="#111" stroke-width="1.3"/>
<circle cx="43" cy="1022" r="1.3" fill="#111"/>
<path d="M41.2 1024 H44.8 V1027 H43.8 V1030 H42.2 V1027 H41.2 Z" fill="#111"/>
<rect x="62" y="1021" width="1" height="9" fill="#8a8a8a"/>
</svg>
<div class="a" style="left:1663px;top:1022px;width:1px;height:9px;background:#8a8a8a"></div>
<div class="t mi" style="left:1673px;top:1018px;font-size:16.8px;line-height:17px">数值</div>
<div class="a" style="left:1715px;top:1015px;width:200px;height:20px;background:#fff;border:1px solid #b9c6da"></div>

<!-- MAIN DROPDOWN -->
<div class="a" style="left:378px;top:42px;width:215px;height:101px;background:#f2f2f2;border:1px solid #d4d4d4;box-shadow:1px 1px 2px rgba(0,0,0,0.12)"></div>
<div class="a" style="left:379px;top:118px;width:208px;height:22px;background:#91c9f7"></div>
<div class="a" style="left:408px;top:114px;width:184px;height:1px;background:#d7d7d7"></div>
<div class="t mi dd" style="left:413px;top:50px">Extension Warehouse</div>
<div class="t mi dd" style="left:413px;top:72px">扩展程序管理器</div>
<div class="t mi dd" style="left:413px;top:94px">开发人员</div>
<div class="t mi dd" style="left:413px;top:123px">Enscape</div>
<svg style="left:576px;top:95px" width="6" height="40" viewBox="0 0 6 40"><path d="M1 0.5 L4.5 4 L1 7.5 M1 29.5 L4.5 33 L1 36.5" fill="none" stroke="#333" stroke-width="1.1"/></svg>

<!-- SUBMENU -->
<div class="a" style="left:587px;top:115px;width:202px;height:290px;background:#f2f2f2;border:1px solid #e2e2e2;box-shadow:1px 1px 2px rgba(0,0,0,0.15)"></div>
<div class="a" style="left:618px;top:187px;width:167px;height:1px;background:#d7d7d7"></div>
<div class="a" style="left:618px;top:304px;width:167px;height:1px;background:#d7d7d7"></div>
<div class="a" style="left:618px;top:333px;width:167px;height:1px;background:#d7d7d7"></div>
<div class="t mi dd" style="left:622px;top:123px">启动 Enscape</div>
<div class="t mi dd" style="left:622px;top:145px;color:#6d6d6d">实时更新</div>
<div class="t mi dd" style="left:622px;top:167px">同步视图</div>
<div class="t mi dd" style="left:622px;top:196px">Enscape 对象</div>
<div class="t mi dd" style="left:622px;top:218px">素材库</div>
<div class="t mi dd" style="left:622px;top:240px">Enscape 材质库</div>
<div class="t mi dd" style="left:622px;top:262px">Enscape 材质编辑器</div>
<div class="t mi dd" style="left:622px;top:284px">上传管理</div>
<div class="t mi dd" style="left:622px;top:313px">常规设置</div>
<div class="t mi dd" style="left:622px;top:342px">反馈</div>
<div class="t mi dd" style="left:622px;top:364px">关于</div>
<div class="t mi dd" style="left:622px;top:386px">Enscape 商店</div>

<!-- RED BOXES -->
<div class="a" style="left:371px;top:13px;width:96px;height:36px;border:3px solid #ff1a0d;border-radius:3px"></div>
<div class="a" style="left:379px;top:101px;width:139px;height:41px;border:3px solid #ff1a0d;border-radius:3px"></div>
<div class="a" style="left:583px;top:111px;width:144px;height:28px;border:3px solid #ff1a0d;border-radius:3px"></div>
</body></html>
